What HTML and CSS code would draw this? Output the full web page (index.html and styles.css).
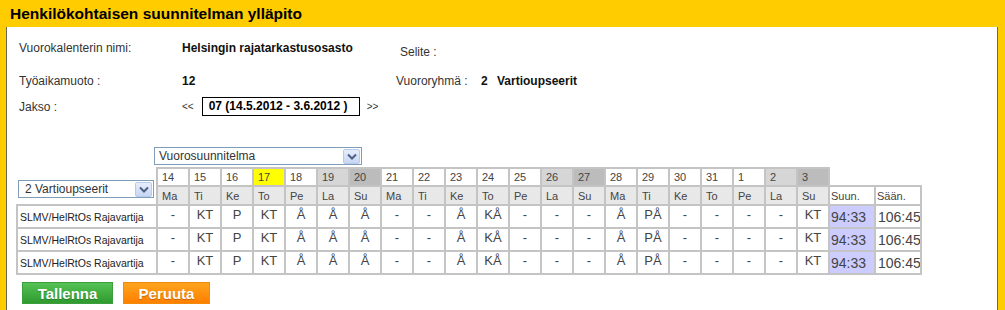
FILE: index.html
```html
<!DOCTYPE html>
<html lang="fi">
<head>
  <meta charset="UTF-8">
  <title>Henkilökohtaisen suunnitelman ylläpito</title>
  <link rel="stylesheet" href="styles.css">
</head>
<body>
  <div class="frame">
    <div class="title">Henkilökohtaisen suunnitelman ylläpito</div>

    <div class="content">
      <div class="info">
        <div class="row first">
          <span class="label">Vuorokalenterin nimi:</span>
          <span class="value">Helsingin rajatarkastusosasto</span>
          <span class="label selite">Selite :</span>
        </div>
        <div class="row second">
          <span class="label">Työaikamuoto :</span>
          <span class="value">12</span>
          <span class="group">
            <span class="label">Vuororyhmä :</span>
            <span class="value group-no">2</span>
            <span class="value group-name">Vartioupseerit</span>
          </span>
        </div>
        <div class="row third">
          <span class="label">Jakso :</span>
          <span class="period">
            <span class="nav-arrow">&lt;&lt;</span>
            <span class="period-box">07 (14.5.2012 - 3.6.2012 )</span>
            <span class="nav-arrow">&gt;&gt;</span>
          </span>
        </div>
      </div>

      <div class="plan-pick">
        <div class="select select-plan">
          <span>Vuorosuunnitelma</span>
          <span class="arrow"><svg width="10" height="7" viewBox="0 0 10 7"><path d="M1 1.5 L5 5.5 L9 1.5" fill="none" stroke="#4d6185" stroke-width="2"/></svg></span>
        </div>
      </div>

      <table class="plan">
        <colgroup>
          <col class="c-name">
          <col span="21" class="c-day">
          <col span="2" class="c-sum">
        </colgroup>
        <tr class="days">
          <td class="pick" rowspan="2">
            <div class="select select-group">
              <span>2 Vartioupseerit</span>
              <span class="arrow"><svg width="10" height="7" viewBox="0 0 10 7"><path d="M1 1.5 L5 5.5 L9 1.5" fill="none" stroke="#4d6185" stroke-width="2"/></svg></span>
            </div>
          </td>
          <td>14</td><td>15</td><td>16</td><td class="today">17</td><td>18</td><td class="sat">19</td><td class="sun">20</td>
          <td>21</td><td>22</td><td>23</td><td>24</td><td>25</td><td class="sat">26</td><td class="sun">27</td>
          <td>28</td><td>29</td><td>30</td><td>31</td><td>1</td><td class="sat">2</td><td class="sun">3</td>
          <td class="blank" colspan="2"></td>
        </tr>
        <tr class="wdays">
          <td>Ma</td><td>Ti</td><td>Ke</td><td>To</td><td>Pe</td><td>La</td><td>Su</td>
          <td>Ma</td><td>Ti</td><td>Ke</td><td>To</td><td>Pe</td><td>La</td><td>Su</td>
          <td>Ma</td><td>Ti</td><td>Ke</td><td>To</td><td>Pe</td><td>La</td><td>Su</td>
          <td class="head">Suun.</td><td class="head">Sään.</td>
        </tr>
        <tr class="data">
          <td class="name">SLMV/HelRtOs Rajavartija</td>
          <td>-</td><td>KT</td><td>P</td><td>KT</td><td>Å</td><td>Å</td><td>Å</td>
          <td>-</td><td>-</td><td>Å</td><td>KÅ</td><td>-</td><td>-</td><td>-</td>
          <td>Å</td><td>PÅ</td><td>-</td><td>-</td><td>-</td><td>-</td><td>KT</td>
          <td class="sum">94:33</td><td class="total">106:45</td>
        </tr>
        <tr class="data">
          <td class="name">SLMV/HelRtOs Rajavartija</td>
          <td>-</td><td>KT</td><td>P</td><td>KT</td><td>Å</td><td>Å</td><td>Å</td>
          <td>-</td><td>-</td><td>Å</td><td>KÅ</td><td>-</td><td>-</td><td>-</td>
          <td>Å</td><td>PÅ</td><td>-</td><td>-</td><td>-</td><td>-</td><td>KT</td>
          <td class="sum">94:33</td><td class="total">106:45</td>
        </tr>
        <tr class="data">
          <td class="name">SLMV/HelRtOs Rajavartija</td>
          <td>-</td><td>KT</td><td>P</td><td>KT</td><td>Å</td><td>Å</td><td>Å</td>
          <td>-</td><td>-</td><td>Å</td><td>KÅ</td><td>-</td><td>-</td><td>-</td>
          <td>Å</td><td>PÅ</td><td>-</td><td>-</td><td>-</td><td>-</td><td>KT</td>
          <td class="sum">94:33</td><td class="total">106:45</td>
        </tr>
      </table>

      <div class="buttons">
        <button class="btn save-btn">Tallenna</button>
        <button class="btn cancel-btn">Peruuta</button>
      </div>
    </div>
  </div>
</body>
</html>
```

FILE: styles.css
```css
body {
    margin: 0;
    font-family: "Liberation Sans", Arial, sans-serif;
    color: #222;
    background: #fff;
}

/* yellow frame */
.frame {
    background: #ffcc00;
    padding: 0 7px 0 6px;
    height: 310px;
    overflow: hidden;
}

.title {
    height: 27px;
    line-height: 27px;
    padding-left: 4px;
    font-size: 15.5px;
    font-weight: bold;
    color: #000;
}

.content {
    background: #fff;
    border-left: 1px solid #6a6a50;
    border-right: 1px solid #6a6a50;
    height: 283px;
    padding-left: 9px;
}

/* info rows */
.info {
    padding-left: 3px;
    padding-top: 12px;
}

.row {
    display: grid;
    grid-template-columns: 163px 214px auto;
    align-items: start;
    line-height: 18px;
    font-size: 12px;
}

.second {
    margin-top: 11px;
}

.third {
    margin-top: 7px;
    align-items: center;
}

.label {
    color: #333;
}

.value {
    font-weight: bold;
    color: #111;
}

.selite {
    padding-left: 4px;
    padding-top: 4px;
}

.group-no {
    margin-left: 10px;
}

.group-name {
    margin-left: 6px;
}

.period {
    display: flex;
    align-items: center;
}

.nav-arrow {
    font-size: 10px;
    color: #333;
}

.period-box {
    margin: 0 7px 0 8px;
    border: 1px solid #000;
    width: 150px;
    height: 17px;
    line-height: 17px;
    padding-left: 6px;
    font-weight: bold;
    color: #000;
}

/* fake selects */
.plan-pick {
    margin-top: 31px;
    padding-left: 138px;
}

.select {
    display: flex;
    justify-content: space-between;
    align-items: center;
    box-sizing: border-box;
    border: 1px solid #7f9db9;
    background: #fff;
    font-size: 12px;
    color: #333;
    padding: 0 1px 0 4px;
}

.select-plan {
    width: 208px;
    height: 18px;
}

.select-group {
    width: 136px;
    height: 18px;
    padding-left: 6px;
}

.arrow {
    display: flex;
    align-items: center;
    justify-content: center;
    width: 15px;
    height: 13px;
    border: 1px solid #b8cbea;
    border-radius: 2px;
    background: linear-gradient(#e6eefc, #c6d6f4);
}

/* plan table */
.plan {
    margin-top: 2px;
    border-collapse: collapse;
    table-layout: fixed;
    width: 905px;
    font-size: 11px;
    color: #444;
}

.c-name { width: 140px; }
.c-day { width: 32px; }
.c-sum { width: 46px; }

.plan td {
    border: 2px solid #c4c4c4;
    padding: 0 0 0 4px;
    white-space: nowrap;
    overflow: hidden;
}

.days td {
    height: 16px;
    background: #fff;
}

.days .sat { background: #d6d6d6; }
.days .sun { background: #bcbcbc; }
.days .today { background: #ffff00; }

.plan .pick {
    border: none;
    background: #fff;
    vertical-align: bottom;
    padding: 0 0 6px 1px;
}

.plan .blank {
    border: none;
    border-bottom: 2px solid #c4c4c4;
}

.wdays td {
    height: 17px;
    background: #e8e8e8;
}

.wdays .head {
    background: #fff;
    padding-left: 1px;
}

.data td {
    height: 21px;
    background: #fff;
    font-size: 13px;
    text-align: center;
    padding: 0;
    vertical-align: top;
    line-height: 18px;
    color: #444;
}

.data .name {
    font-size: 10.5px;
    text-align: left;
    padding-left: 2px;
    vertical-align: middle;
    color: #222;
}

.data .sum {
    background: #ccccff;
    font-size: 14px;
    text-align: left;
    padding-left: 1px;
    vertical-align: middle;
}

.data .total {
    font-size: 14px;
    text-align: left;
    padding-left: 2px;
    vertical-align: middle;
}

/* buttons */
.buttons {
    margin-top: 7px;
    padding-left: 6px;
    display: flex;
    gap: 10px;
}

.btn {
    height: 22px;
    padding: 0;
    font-family: "Liberation Sans", Arial, sans-serif;
    font-size: 15px;
    font-weight: bold;
    color: #fff;
    text-shadow: 0 1px 1px rgba(0,0,0,0.25);
    border: 1px solid;
    cursor: pointer;
}

.save-btn {
    width: 91px;
    background: linear-gradient(#55c255, #2f9a2f);
    border-color: #3d9e3d;
}

.cancel-btn {
    width: 87px;
    background: linear-gradient(#ffa41f, #ff7f00);
    border-color: #f28a0a;
}
```
